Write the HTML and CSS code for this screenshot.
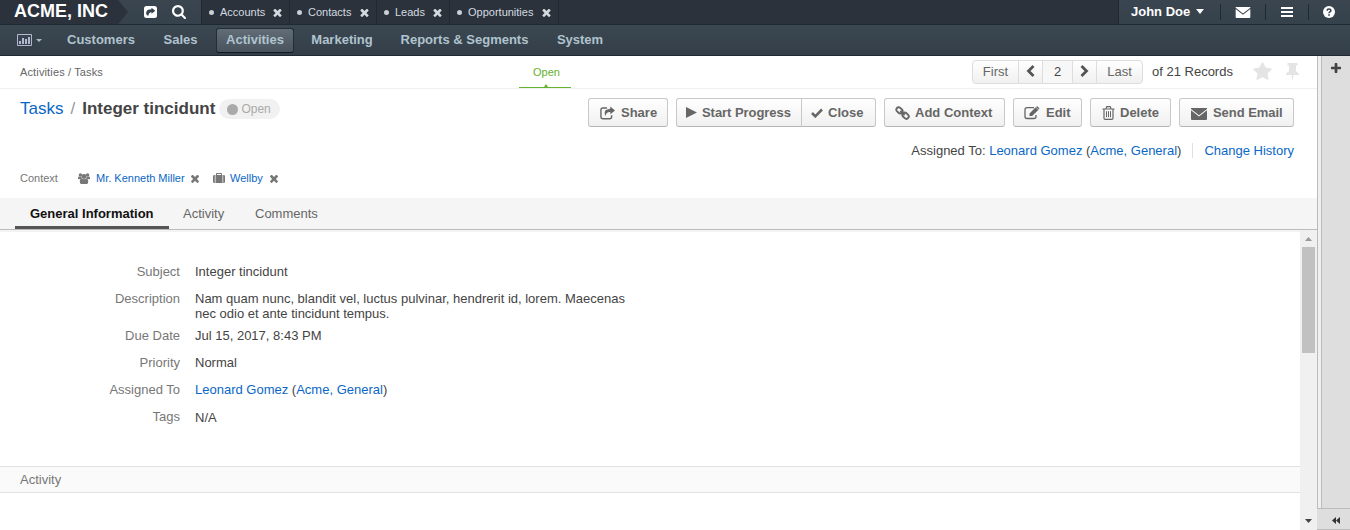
FILE: index.html
```html
<!DOCTYPE html>
<html lang="en">
<head>
<meta charset="utf-8">
<title>Integer tincidunt - Tasks</title>
<link rel="stylesheet" href="styles.css">
</head>
<body>
<svg class="defs" width="0" height="0">
  <symbol id="times" viewBox="302 238 1188 1316"><path d="M1490 1322q0 40-28 68l-136 136q-28 28-68 28t-68-28l-294-294-294 294q-28 28-68 28t-68-28l-136-136q-28-28-28-68t28-68l294-294-294-294q-28-28-28-68t28-68l136-136q28-28 68-28t68 28l294 294 294-294q28-28 68-28t68 28l136 136q28 28 28 68t-28 68l-294 294 294 294q28 28 28 68z"/></symbol>
  <symbol id="plus" viewBox="192 128 1408 1408"><path d="M1600 736v192q0 40-28 68t-68 28h-416v416q0 40-28 68t-68 28h-192q-40 0-68-28t-28-68v-416h-416q-40 0-68-28t-28-68v-192q0-40 28-68t68-28h416v-416q0-40 28-68t68-28h192q40 0 68 28t28 68v416h416q40 0 68 28t28 68z"/></symbol>
  <symbol id="search" viewBox="64 128 1664 1664"><path d="M1216 832q0-185-131.500-316.500t-316.500-131.500-316.500 131.500-131.500 316.500 131.500 316.500 316.500 131.500 316.500-131.500 131.500-316.500zm512 832q0 52-38 90t-90 38q-54 0-90-38l-343-342q-179 124-399 124-143 0-273.500-55.500t-225-150-150-225-55.500-273.500 55.500-273.500 150-225 225-150 273.500-55.500 273.500 55.500 225 150 150 225 55.500 273.500q0 220-124 399l343 343q37 37 37 90z"/></symbol>
  <symbol id="star" viewBox="64 32 1664 1588"><path d="M1728 647q0 22-26 48l-363 354 86 500q1 7 1 20 0 21-10.500 35.500t-30.500 14.500q-19 0-40-12l-449-236-449 236q-22 12-40 12-21 0-31.500-14.500t-10.500-35.500q0-6 2-20l86-500-364-354q-25-27-25-48 0-37 56-46l502-73 225-455q19-41 49-41t49 41l225 455 502 73q56 9 56 46z"/></symbol>
  <symbol id="pin" viewBox="0 0 13 18"><path d="M1.500 0h10v2.500h-1.500v6q3 1 3 3.500h-5.500l-1 6-1-6h-5.500q0-2.500 3-3.500v-6h-1.500z"/></symbol>
  <symbol id="envelope" viewBox="0 0 16 12"><path d="M0 0h16v.9L8 7.200 0 .9zM0 2.300l8 6.200 8-6.200v8.700q0 1-1 1h-14q-1 0-1-1z"/></symbol>
  <symbol id="share" viewBox="0 0 16 14"><path d="M7.500 1.700H3.200q-2.200 0-2.200 2.200v7q0 2.200 2.200 2.200h7q2.200 0 2.200-2.200V9.500" fill="none" stroke="currentColor" stroke-width="1.500"/><path d="M11 0 16 4.200 11 8.400V6Q6.500 5.800 5.800 10.500 2.500 3 11 2.500z"/></symbol>
  <symbol id="link" viewBox="0 0 15 14"><g fill="none" stroke="currentColor" stroke-width="1.900"><rect x="1" y="1.900" width="6.800" height="4.800" rx="2.400" transform="rotate(42 4.400 4.300)"/><rect x="7.200" y="7.300" width="6.800" height="4.800" rx="2.400" transform="rotate(42 10.600 9.700)"/><path d="m5.300 5 4.400 4"/></g></symbol>
  <symbol id="edit" viewBox="0 0 16 14"><path d="M10 1.700H3Q1 1.700 1 3.700v6.800q0 2 2 2h7q2 0 2-2V9" fill="none" stroke="currentColor" stroke-width="1.300"/><path d="m5.500 7.500 6.200-6.200 2.600 2.600-6.200 6.200H5.500zM12.300.7q.8-.8 1.600 0l1 1q.8.8 0 1.600l-.3.300L12 1z"/></symbol>
  <symbol id="trash" viewBox="0 0 13 14"><g fill="none" stroke="currentColor"><path d="M.5 3h12M4 2.500 4.800.6h3.400L9 2.500" stroke-width="1.200"/><path d="M2 3v9.200q0 1.200 1.200 1.200h6.600q1.200 0 1.200-1.200V3" stroke-width="1.200"/><path d="M4.500 5.200v6M6.500 5.200v6M8.500 5.200v6"/></g></symbol>
  <symbol id="users" viewBox="0 0 12 11"><circle cx="2.400" cy="2" r="1.700"/><circle cx="9.600" cy="2" r="1.700"/><circle cx="6" cy="3.500" r="2.400"/><path d="M0 6V5q0-1.400 1.200-1.400L3.400 4 4 5.600 2.600 6.200zM12 6V5q0-1.400-1.200-1.400L8.600 4 8 5.600l1.400.6zM3.800 5.500Q6 7 8.200 5.500 10.200 5.800 10.200 9q0 2-1.500 2H3.300Q1.800 11 1.800 9q0-3.200 2-3.500z"/></symbol>
  <symbol id="case" viewBox="0 0 12 10"><path d="M3 2V.8Q3 0 3.800 0h4.400Q9 0 9 .8V2h.5v8h-7V2zM4 2h4V1H4zM0 3.200Q0 2 1.200 2h.6v8h-.6Q0 10 0 8.800zM12 3.200Q12 2 10.800 2h-.6v8h.6Q12 10 12 8.800z"/></symbol>
</svg>
<header class="top">
  <div class="brand">ACME, INC</div>
  <div class="tools">
    <svg class="sharebox" viewBox="0 0 13 12"><rect width="13" height="12" rx="2.500"/><path class="cut" d="M7.500 1.700 11.300 4.800 7.500 7.800V6.200Q4.800 6 4.300 9.800 1.300 9 2.500 5.600 3.500 3.300 7.500 3.300z"/></svg>
    <svg class="i-search"><use href="#search"/></svg>
  </div>
  <nav class="pins">
    <div class="pin p1"><i></i><span>Accounts</span><svg><use href="#times"/></svg></div>
    <div class="pin p2"><i></i><span>Contacts</span><svg><use href="#times"/></svg></div>
    <div class="pin p3"><i></i><span>Leads</span><svg><use href="#times"/></svg></div>
    <div class="pin p4"><i></i><span>Opportunities</span><svg><use href="#times"/></svg></div>
  </nav>
  <div class="user">
    <div class="name">John Doe<b class="caret"></b></div>
    <div class="u mail"><svg class="i-mail"><use href="#envelope"/></svg></div>
    <div class="u bars"><svg viewBox="0 0 12 10"><path d="M0 0h12v2H0zM0 4h12v2H0zM0 8h12v2H0z"/></svg></div>
    <div class="u help"><svg viewBox="0 0 12 12"><circle cx="6" cy="6" r="6"/><path class="q" d="M4.100 4.700Q4.200 3 6 3t1.900 1.500Q7.900 5.400 6.900 5.900 6 6.400 6 7.300M6 8.300v1.500"/></svg></div>
  </div>
</header>
<nav class="menu">
  <div class="dash"><svg viewBox="0 0 15 12"><path fill="none" stroke="currentColor" d="M.5.5h14v11H.5z"/><path d="M2 7h2v3H2zM5 4h2v6H5zM8 5h2v5H8zM11 3h2v7h-2z"/></svg><b class="caret"></b></div>
  <a class="m1">Customers</a><a class="m2">Sales</a><a class="m3 on">Activities</a><a class="m4">Marketing</a><a class="m5">Reports &amp; Segments</a><a class="m6">System</a>
</nav>
<div class="body">
  <main>
    <div class="crumbs">
      <div class="trail">Activities / Tasks</div>
      <div class="step">Open</div>
      <div class="pager"><span class="g1">First</span><span class="g2"><svg viewBox="0 0 9 12"><path d="M7.500 1 2.500 6l5 5"/></svg></span><span class="g3">2</span><span class="g2"><svg viewBox="0 0 9 12"><path d="m1.500 1 5 5-5 5"/></svg></span><span class="g5">Last</span></div>
      <div class="records">of 21 Records</div>
      <svg class="i-star"><use href="#star"/></svg><svg class="i-pin"><use href="#pin"/></svg>
    </div>
    <div class="titlebar">
      <h1><a>Tasks</a><em>/</em><b>Integer tincidunt</b></h1>
      <div class="status"><i></i>Open</div>
      <div class="actions">
        <div class="btn b1"><svg class="w15"><use href="#share"/></svg>Share</div>
        <div class="group"><div class="btn b2"><svg class="w11" viewBox="0 0 11 11"><path d="M0 0 11 5.500 0 11z"/></svg>Start Progress</div><div class="btn b3"><svg class="w12" viewBox="0 0 12 10"><path d="m1 5 3.300 3.300L11 1.500" fill="none" stroke="currentColor" stroke-width="2.600"/></svg>Close</div></div>
        <div class="btn b4"><svg class="w15"><use href="#link"/></svg>Add Context</div>
        <div class="btn b5"><svg class="w16"><use href="#edit"/></svg>Edit</div>
        <div class="btn b6"><svg class="w13"><use href="#trash"/></svg>Delete</div>
        <div class="btn b7"><svg class="w16 env"><use href="#envelope"/></svg>Send Email</div>
      </div>
    </div>
    <div class="assigned"><span>Assigned To: <a>Leonard Gomez</a> (<a>Acme, General</a>)</span><a class="history">Change History</a></div>
    <div class="context"><span class="label">Context</span><svg class="c1"><use href="#users"/></svg><a class="ca">Mr. Kenneth Miller</a><svg class="cx"><use href="#times"/></svg><svg class="c2"><use href="#case"/></svg><a class="cb">Wellby</a><svg class="cx"><use href="#times"/></svg></div>
    <div class="tabs"><a class="active">General Information</a><a class="t2">Activity</a><a>Comments</a></div>
    <div class="scroller">
      <div class="content">
        <dl>
          <dt>Subject</dt><dd>Integer tincidunt</dd>
          <dt>Description</dt><dd>Nam quam nunc, blandit vel, luctus pulvinar, hendrerit id, lorem. Maecenas<br>nec odio et ante tincidunt tempus.</dd>
          <dt>Due Date</dt><dd>Jul 15, 2017, 8:43 PM</dd>
          <dt>Priority</dt><dd>Normal</dd>
          <dt>Assigned To</dt><dd><a>Leonard Gomez</a> (<a>Acme, General</a>)</dd>
          <dt>Tags</dt><dd class="tags">N/A</dd>
        </dl>
        <div class="section">Activity</div>
      </div>
      <div class="bar"><svg class="up" viewBox="0 0 7 4"><path d="M0 4 3.500 0 7 4z"/></svg><div class="thumb"></div><svg class="down" viewBox="0 0 7 4"><path d="M0 0h7L3.500 4z"/></svg></div>
    </div>
  </main>
  <aside>
    <div class="rail"><svg class="add"><use href="#plus"/></svg></div>
    <div class="collapse"><svg viewBox="0 0 8 7"><path d="M4 0v7L0 3.500zM8 0v7L4 3.500z"/></svg></div>
  </aside>
</div>
</body>
</html>
```
FILE: styles.css
```css
* { box-sizing: border-box; }
body { margin: 0; width: 1350px; height: 530px; overflow: hidden; background: #fff; color: #444; font: 13px/15px "Liberation Sans", Arial, sans-serif; }
svg { fill: currentColor; flex: none; display: block; }
.defs { position: absolute; }
a { color: #0a67c6; white-space: nowrap; }
.top { display: flex; height: 25px; border-bottom: 1px solid #202831; background: linear-gradient(#3a454f, #35414b); }
.brand { width: 128px; height: 24px; padding-left: 14px; background: #2b323b; color: #fff; font-weight: bold; font-size: 18px; line-height: 23px; white-space: nowrap; clip-path: polygon(0 0, 118px 0, 128px 12px, 118px 24px, 0 24px); }
.tools { width: 73px; display: flex; align-items: center; color: #fff; padding-left: 16px; }
.sharebox { width: 13px; height: 12px; margin-right: 15px; }
.cut { fill: #35414b; }
.i-search { width: 14px; height: 14px; }
.pins { width: 918px; display: flex; background: #2b323b; border-left: 1px solid #202831; border-right: 1px solid #202831; color: #d3dbe0; font-size: 11px; }
.pin { display: flex; align-items: center; border-right: 1px solid #202831; padding: 0 0 0 7px; }
.pin i { width: 5px; height: 5px; border-radius: 50%; background: #c8d0d5; margin-right: 6px; }
.pin svg { width: 9px; height: 9px; margin-left: auto; margin-right: 7px; }
.p1 { width: 88px; } .p2 { width: 87px; } .p3 { width: 73px; } .p4 { width: 109px; }
.user { display: flex; align-items: center; color: #fff; flex: 1; }
.name { width: 101px; padding-left: 12px; font-weight: bold; display: flex; align-items: center; height: 24px; padding-bottom: 1px; }
.caret { border: 4.500px solid transparent; border-top: 5px solid; border-bottom: 0; margin-left: 6px; }
.u { height: 16px; border-left: 1px solid #202831; display: flex; align-items: center; }
.mail { width: 45px; padding-left: 14px; } .i-mail { width: 16px; height: 11px; margin-top: 1px; }
.bars { width: 43px; padding-left: 15px; } .bars svg { width: 12px; height: 10px; }
.help { padding-left: 14px; } .help svg { width: 12px; height: 12px; margin-bottom: 1px; }
.q { fill: none; stroke: #35414b; stroke-width: 1.600; }
.menu { height: 31px; display: flex; align-items: center; border-bottom: 1px solid #202831; background: linear-gradient(#3b4751, #333e48); color: #a9bac5; }
.menu a { color: #b0c3ce; font-weight: bold; height: 25px; line-height: 23px; text-align: center; }
.dash { width: 57px; padding-left: 17px; display: flex; align-items: center; }
.dash svg { width: 15px; height: 12px; color: #b3b8d0; }
.dash .caret { border-width: 3.500px; border-top-width: 3.500px; border-bottom-width: 0; margin-left: 4px; }
.menu .m1 { width: 88px; } .menu .m2 { width: 71px; } .menu .m3 { width: 78px; } .menu .m4 { width: 96px; } .menu .m5 { width: 149px; } .menu .m6 { width: 82px; }
.menu .on { border: 1px solid #252d35; border-bottom: 1px solid #111820; border-radius: 3px; background: linear-gradient(#616c76, #48535d); line-height: 21px; }
.body { display: flex; height: 474px; }
main { width: 1317px; display: flex; flex-direction: column; }
.crumbs { height: 33px; border-bottom: 1px solid #f0f0f0; display: flex; align-items: center; flex: none; }
.trail { width: 519px; padding-left: 20px; font-size: 11px; color: #666; letter-spacing: .14px; }
.step { width: 52px; height: 32px; line-height: 32px; border-bottom: 1px solid #64b22f; text-align: center; font-size: 11px; color: #64b22f; position: relative; margin-right: 401px; padding-left: 3px; }
.step::after { content: ""; position: absolute; left: 25px; bottom: 0; border: 2.500px solid transparent; border-top: 0; border-bottom: 3px solid #64b22f; }
.pager { display: flex; width: 171px; height: 24px; border: 1px solid #ddd; border-radius: 4px; background: linear-gradient(#fff, #f0f0f0); color: #666; line-height: 22px; text-align: center; margin-right: 9px; overflow: hidden; }
.pager span { border-right: 1px solid #ddd; }
.g1 { width: 46px; } .g2 { width: 24px; padding: 4px 0 0 7px; } .g3 { width: 30px; color: #444; background: #f7f7f7; } .pager .g5 { width: 45px; border: 0; }
.g2 svg { width: 9px; height: 12px; fill: none; stroke: #555; stroke-width: 2.800; }
.records { width: 101px; white-space: nowrap; padding-bottom: 1px; }
.i-star { width: 19px; height: 18px; color: #e4e4e4; margin: 0 14px 2px 0; }
.i-pin { width: 13px; height: 18px; color: #e4e4e4; }
.titlebar { height: 48px; display: flex; padding: 9px 23px 0 20px; flex: none; }
h1 { margin: 1px 0 0; font-size: 17px; line-height: 20px; font-weight: normal; display: flex; white-space: nowrap; }
h1 em { color: #999; font-style: normal; margin: 0 7px; }
h1 b { color: #444; }
.status { height: 20px; width: 61px; margin-left: 4px; margin-top: 1px; border-radius: 10px; background: #f1f1f1; color: #aaa; font-size: 12px; line-height: 20px; display: flex; align-items: center; padding-left: 8px; }
.status i { width: 11px; height: 11px; border-radius: 50%; background: #aaa; margin-right: 3px; }
.actions { display: flex; gap: 8px; margin-left: auto; }
.group { display: flex; }
.btn { height: 29px; border: 1px solid #c8c8c8; border-bottom-color: #b5b5b5; border-radius: 3px; background: linear-gradient(#fff, #f0f0f0); color: #666; font-weight: bold; display: flex; align-items: center; white-space: nowrap; padding: 0 0 0 11px; line-height: 27px; }
.btn svg { height: 14px; margin-right: 6px; color: #666; }
.btn .w15 { width: 15px; } .btn .w11 { width: 11px; height: 11px; margin-right: 5px; } .btn .w12 { width: 12px; height: 10px; margin-right: 5px; } .btn .w16 { width: 16px; } .btn .w13 { width: 13px; margin-right: 5px; } .btn .env { height: 12px; margin-top: 2px; }
.b1 { width: 80px; } .b2 { width: 126px; padding-left: 9px; border-radius: 3px 0 0 3px; letter-spacing: -.05px; } .b3 { width: 75px; border-radius: 0 3px 3px 0; margin-left: -1px; padding-left: 9px; } .b4 { width: 121px; padding-left: 10px; } .b4 svg { margin-right: 5px; } .b5 { width: 69px; padding-left: 10px; } .b6 { width: 81px; } .b7 { width: 115px; letter-spacing: -.05px; }
.assigned { height: 27px; display: flex; justify-content: flex-end; align-items: center; padding-right: 23px; flex: none; }
.history { border-left: 1px solid #e0e0e0; margin-left: 11px; padding-left: 11px; }
.context { height: 34px; display: flex; align-items: center; padding: 0 0 6px 20px; font-size: 11px; flex: none; color: #777; }
.label { width: 58px; } .c1 { width: 12px; height: 11px; margin-right: 6px; } .ca { width: 95px; } .cx { width: 8px; height: 9px; margin-top: 1px; } .c2 { width: 12px; height: 10px; margin: 0 5px 0 14px; } .cb { width: 40px; }
.tabs { height: 32px; background: #f5f5f5; border-bottom: 1px solid #bbb; display: flex; padding-left: 15px; line-height: 32px; flex: none; }
.tabs a { color: #666; width: 101px; height: 31px; }
.tabs .active { width: 154px; color: #111; font-weight: bold; border-bottom: 3px solid #555; padding-left: 15px; margin-right: 14px; }
.tabs .t2 { width: 72px; }
.scroller { flex: 1; display: flex; overflow: hidden; }
.content { width: 1300px; box-shadow: inset 0 2px #f3f3f3; padding-top: 34px; }
dl { margin: 0; display: grid; grid-template-columns: 180px 500px; column-gap: 15px; grid-template-rows: 27px 37px 27px 27px 27px 57px; }
dt { text-align: right; color: #777; }
dd { margin: 0; white-space: nowrap; }
.tags { padding-top: 1px; }
.section { height: 27px; border: solid #e2e2e2; border-width: 1px 0; background: #fafafa; padding-left: 20px; line-height: 25px; color: #777; }
.bar { width: 17px; background: #f0f0f0; display: flex; flex-direction: column; align-items: center; padding-top: 7px; }
.up { width: 7px; height: 4px; color: #999; } .thumb { width: 13px; height: 106px; background: #c1c1c1; margin-top: 6px; } .down { width: 7px; height: 4px; color: #444; margin-top: auto; margin-bottom: 7px; }
aside { width: 33px; display: flex; flex-direction: column; }
.rail { height: 452px; border-left: 1px solid #bbb; background: linear-gradient(90deg, #f0f0f0 3px, #bbb 3px, #bbb 4px, #dedede 4px); padding: 7px 0 0 13px; }
.add { width: 10px; height: 10px; color: #444; }
.collapse { height: 22px; border: solid #bbb; border-width: 1px 0; background: #dedede; display: flex; align-items: center; padding: 2px 0 0 15px; }
.collapse svg { width: 8px; height: 7px; color: #333; }
```
